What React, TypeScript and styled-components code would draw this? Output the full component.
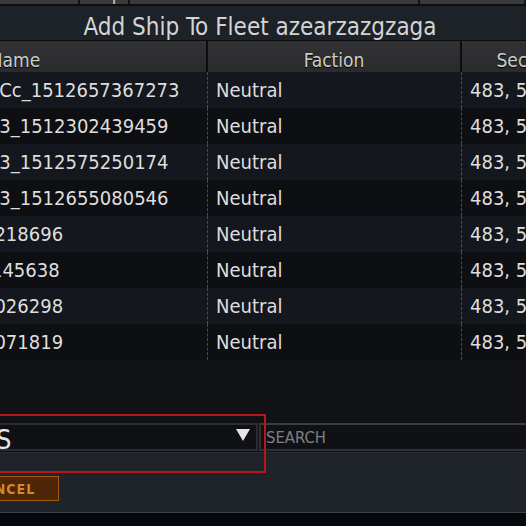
import React from 'react';
import styled, { createGlobalStyle } from 'styled-components';

const FONT = `"DejaVu Sans Condensed", "DejaVu Sans", sans-serif`;

const GlobalStyle = createGlobalStyle`
  html, body {
    margin: 0;
    padding: 0;
    background: #05080c;
  }
  #root {
    width: 526px;
    height: 526px;
    overflow: hidden;
  }
  * {
    box-sizing: border-box;
  }
`;

interface Ship {
	name: string;
	faction: string;
	sector: string;
	status: string;
}

const ships: Ship[] = [
	{ name: 'Explorer_Mk2_Cc_1512657367273', faction: 'Neutral', sector: '483, 512', status: 'Docked' },
	{ name: 'Explorer_Mk2_3_1512302439459', faction: 'Neutral', sector: '483, 512', status: 'Docked' },
	{ name: 'Explorer_Mk2_3_1512575250174', faction: 'Neutral', sector: '483, 512', status: 'Docked' },
	{ name: 'Explorer_Mk2_3_1512655080546', faction: 'Neutral', sector: '483, 512', status: 'Docked' },
	{ name: 'Scout_P_1512218696', faction: 'Neutral', sector: '483, 512', status: 'Docked' },
	{ name: 'Scout_r_1512145638', faction: 'Neutral', sector: '483, 512', status: 'Docked' },
	{ name: 'Scout_P_1512026298', faction: 'Neutral', sector: '483, 512', status: 'Docked' },
	{ name: 'Scout_P_1512071819', faction: 'Neutral', sector: '483, 512', status: 'Docked' },
];

const Screen = styled.div`
	width: 526px;
	height: 526px;
	overflow: hidden;
	background: #05080c;
	font-family: ${FONT};
	font-stretch: condensed;
`;

// the list behind the dialog, only its header's lower edge shows
const BackHeader = styled.div`
	display: grid;
	grid-template-columns: 80px 50px 290px 1fr;
	height: 24px;
	margin-top: -20px;
	background: #3a3a3d;
`;

const BackCell = styled.div`
	display: flex;
	align-items: flex-end;
	justify-content: center;
	padding-bottom: 1px;
	border-right: 2px solid #141518;
	color: #c8c8c8;
	font-size: 19px;
	line-height: 19px;
	overflow: hidden;
`;

const Dialog = styled.section`
	width: 872px;
	margin-left: -176px;
	border-top: 2px solid #0b0d10;
	display: flex;
	flex-direction: column;
`;

const TitleBar = styled.header`
	height: 35px;
	display: flex;
	align-items: flex-end;
	justify-content: center;
	padding-bottom: 1px;
	background: #1d2128;
	border-bottom: 1px solid #0a0b0e;
	color: #d4d4d4;
	font-size: 24px;
	line-height: 24px;
	white-space: nowrap;
`;

const COLUMNS = '384px 254px 126px 1fr';

const HeaderRow = styled.div`
	display: grid;
	grid-template-columns: ${COLUMNS};
	height: 31px;
	background: linear-gradient(#323234, #2b2b2d);
`;

const HeaderCell = styled.div`
	padding-top: 8px;
	text-align: center;
	border-right: 2px solid #0c0d10;
	color: #cdcdcd;
	font-size: 19px;
	line-height: 23px;
	text-shadow: 0 1px 1px #000;
	white-space: nowrap;
	overflow: hidden;
	&:last-child {
		border-right: none;
	}
`;

const Body = styled.div`
	height: 350px;
	background: #111216;
`;

const Row = styled.div<{ $odd: boolean }>`
	display: grid;
	grid-template-columns: ${COLUMNS};
	height: 36px;
	background: ${(p) => (p.$odd ? '#14171d' : '#0e0f13')};
`;

const Cell = styled.div<{ $indent?: number }>`
	padding-left: ${(p) => p.$indent ?? 8}px;
	border-right: 1px dashed #4a4c50;
	color: #dedede;
	font-size: 20px;
	line-height: 36px;
	white-space: nowrap;
	overflow: hidden;
	&:last-child {
		border-right: none;
	}
`;

const Bottom = styled.div`
	position: relative;
`;

const Controls = styled.div`
	display: flex;
	gap: 1px;
	height: 30px;
	padding: 1px 12px 1px 53px;
	background: #111216;
`;

const Dropdown = styled.div`
	width: 381px;
	display: flex;
	align-items: flex-start;
	justify-content: space-between;
	padding: 1px 6px 0 10px;
	background: #0f1115;
	border: 2px solid #2b2d32;
	overflow: hidden;
`;

const DropdownValue = styled.span`
	color: #e6e6e6;
	font-size: 27px;
	line-height: 27px;
	white-space: nowrap;
`;

const Caret = styled.svg`
	flex: none;
	margin-top: 3px;
`;

const Search = styled.input`
	flex: 1;
	min-width: 0;
	padding: 0 5px;
	background: #0f1115;
	border: 2px solid #2f3135;
	border-top-color: #3a3c40;
	color: #e6e6e6;
	font-family: ${FONT};
	font-stretch: condensed;
	font-size: 16.5px;
	outline: none;
	&::placeholder {
		color: #7e8083;
	}
`;

const Footer = styled.footer`
	height: 61px;
	padding: 23px 0 0 126px;
	background: #1f232a;
	border-top: 1px solid #292d34;
	border-bottom: 1px solid #3c434b;
`;

const CancelButton = styled.button`
	width: 109px;
	height: 25px;
	padding: 0;
	background: #4c2606;
	border: 1px solid #a35a12;
	color: #d4882a;
	font-family: ${FONT};
	font-stretch: condensed;
	font-weight: bold;
	font-size: 14px;
	letter-spacing: 1px;
	cursor: pointer;
`;

// tutorial highlight drawn over the filter controls
const Highlight = styled.div`
	position: absolute;
	left: 0;
	top: -8px;
	width: 442px;
	height: 59px;
	border: 2px solid #b5171d;
	pointer-events: none;
`;

const App = () => {
	return (
		<Screen>
			<GlobalStyle />
			<BackHeader>
				<BackCell />
				<BackCell>Ship</BackCell>
				<BackCell>Faction</BackCell>
				<BackCell>Sector</BackCell>
			</BackHeader>
			<Dialog>
				<TitleBar>Add Ship To Fleet azearzazgzaga</TitleBar>
				<HeaderRow>
					<HeaderCell>Name</HeaderCell>
					<HeaderCell>Faction</HeaderCell>
					<HeaderCell>Sector</HeaderCell>
					<HeaderCell>Status</HeaderCell>
				</HeaderRow>
				<Body>
					{ships.map((ship, index) => (
						<Row key={ship.name} $odd={index % 2 === 0}>
							<Cell $indent={45}>{ship.name}</Cell>
							<Cell>{ship.faction}</Cell>
							<Cell>{ship.sector}</Cell>
							<Cell>{ship.status}</Cell>
						</Row>
					))}
				</Body>
				<Bottom>
					<Controls>
						<Dropdown>
							<DropdownValue>ALL SHIPS</DropdownValue>
							<Caret width="14" height="12" viewBox="0 0 14 12">
								<polygon points="0,0 14,0 7,12" fill="#e6e6e6" />
							</Caret>
						</Dropdown>
						<Search placeholder="SEARCH" />
					</Controls>
					<Footer>
						<CancelButton>CANCEL</CancelButton>
					</Footer>
					<Highlight />
				</Bottom>
			</Dialog>
		</Screen>
	);
};

export default App;
